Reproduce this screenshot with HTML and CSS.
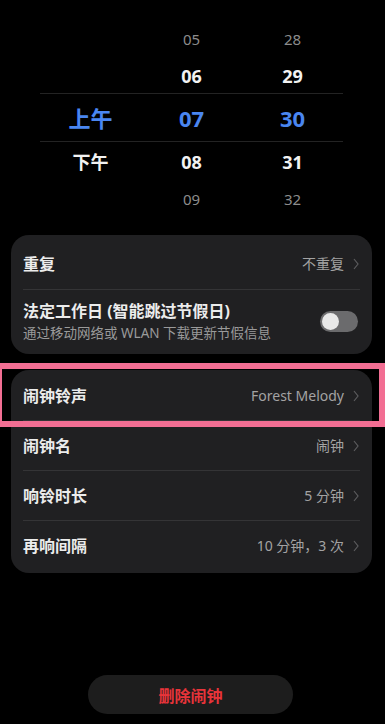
FILE: index.html
```html
<!DOCTYPE html>
<html lang="zh-CN">
<head>
<meta charset="utf-8">
<title>闹钟</title>
<link rel="stylesheet" href="styles.css">
</head>
<body>
<div class="screen">
  <div class="picker">
    <div class="prow r1"><span></span><span class="far">05</span><span class="far">28</span></div>
    <div class="prow r2"><span></span><span class="near">06</span><span class="near">29</span></div>
    <div class="prow r3"><span class="sel">上午</span><span class="sel">07</span><span class="sel">30</span></div>
    <div class="prow r4"><span class="near">下午</span><span class="near">08</span><span class="near">31</span></div>
    <div class="prow r5"><span></span><span class="far">09</span><span class="far">32</span></div>
  </div>

  <div class="card card1">
    <div class="row row-first">
      <span class="label">重复</span>
      <span class="value">不重复<svg class="chev" viewBox="0 0 6 12"><path d="M1 1 L5 6 L1 11" /></svg></span>
    </div>
    <div class="divider"></div>
    <div class="row row-tall">
      <div class="texts">
        <span class="label">法定工作日 (智能跳过节假日)</span>
        <span class="sub">通过移动网络或 WLAN 下载更新节假信息</span>
      </div>
      <span class="toggle"><span class="knob"></span></span>
    </div>
  </div>

  <div class="card card2">
    <div class="row">
      <span class="label">闹钟铃声</span>
      <span class="value">Forest Melody<svg class="chev" viewBox="0 0 6 12"><path d="M1 1 L5 6 L1 11" /></svg></span>
    </div>
    <div class="divider"></div>
    <div class="row">
      <span class="label">闹钟名</span>
      <span class="value">闹钟<svg class="chev" viewBox="0 0 6 12"><path d="M1 1 L5 6 L1 11" /></svg></span>
    </div>
    <div class="divider"></div>
    <div class="row">
      <span class="label">响铃时长</span>
      <span class="value">5 分钟<svg class="chev" viewBox="0 0 6 12"><path d="M1 1 L5 6 L1 11" /></svg></span>
    </div>
    <div class="divider"></div>
    <div class="row">
      <span class="label">再响间隔</span>
      <span class="value">10 分钟，3 次<svg class="chev" viewBox="0 0 6 12"><path d="M1 1 L5 6 L1 11" /></svg></span>
    </div>
  </div>

  <div class="bottom">
    <button class="delete">删除闹钟</button>
  </div>

  <div class="highlight"></div>
</div>
</body>
</html>
```

FILE: styles.css
```css
* { box-sizing: border-box; }
html, body {
  margin: 0;
  padding: 0;
  background: #000;
}
body {
  font-family: "Noto Sans", "Noto Sans CJK SC", sans-serif;
  color: #eeeeee;
}
.screen {
  position: relative;
  width: 385px;
  height: 724px;
  overflow: hidden;
  display: flex;
  flex-direction: column;
}

/* picker */
.picker {
  margin: 20px 0 0 40px;
  width: 303px;
  display: flex;
  flex-direction: column;
}
.prow {
  display: grid;
  grid-template-columns: 101px 101px 101px;
  align-items: center;
  justify-items: center;
}
.prow span { display: block; }
.r1 { height: 38px; }
.r2 { height: 35px; }
.r3 { height: 49px; border-top: 1px solid #232323; border-bottom: 1px solid #232323; }
.r4 { height: 40px; }
.r5 { height: 34px; }
.far {
  font-size: 15px;
  color: #8c8c8c;
  line-height: 20px;
}
.near {
  font-size: 18px;
  font-weight: 700;
  color: #f2f2f2;
  line-height: 24px;
}
.sel {
  font-size: 22px;
  font-weight: 700;
  color: #4a86f0;
  line-height: 28px;
}

/* cards */
.card {
  margin: 0 13px 0 11px;
  background: #202022;
  border-radius: 18px;
  padding: 0 12px;
}
.card1 { margin-top: 19px; }
.card2 { margin-top: 16px; padding-top: 1px; padding-bottom: 3px; }
.row {
  display: flex;
  align-items: center;
  justify-content: space-between;
  height: 49px;
}
.card1 .row-first { height: 54px; padding-top: 4px; }
.card1 .row-tall { height: 64px; }
.divider {
  height: 1px;
  background: #343436;
}
.label {
  font-size: 16px;
  font-weight: 700;
  color: #ececec;
  line-height: 22px;
}
.value {
  display: flex;
  align-items: center;
  font-size: 14px;
  color: #a3a3a3;
  line-height: 20px;
}
.chev {
  width: 6px;
  height: 12px;
  margin-left: 9px;
  margin-right: 1px;
  fill: none;
  stroke: #5c5c5e;
  stroke-width: 1.2;
}
.texts {
  display: flex;
  flex-direction: column;
}
.sub {
  font-size: 13.5px;
  color: #9a9a9a;
  line-height: 22px;
}
.toggle {
  width: 38px;
  height: 21px;
  border-radius: 11px;
  background: #6b6b6d;
  display: flex;
  align-items: center;
  padding-left: 2px;
  margin-right: 2px;
  margin-top: -2px;
}
.knob {
  width: 17px;
  height: 17px;
  border-radius: 50%;
  background: #e8e8e8;
}

/* bottom button */
.bottom {
  margin-top: auto;
  display: flex;
  justify-content: center;
  padding-bottom: 10px;
}
.delete {
  margin-left: -4px;
  width: 205px;
  height: 39px;
  border: none;
  border-radius: 20px;
  background: #1d1d1d;
  color: #e8343a;
  font-family: "Noto Sans CJK SC", sans-serif;
  font-size: 16px;
  font-weight: 700;
}

/* annotation overlay */
.highlight {
  position: absolute;
  left: -4px;
  top: 363px;
  width: 389px;
  height: 64px;
  border: 6px solid #f26e93;
  pointer-events: none;
}
```
